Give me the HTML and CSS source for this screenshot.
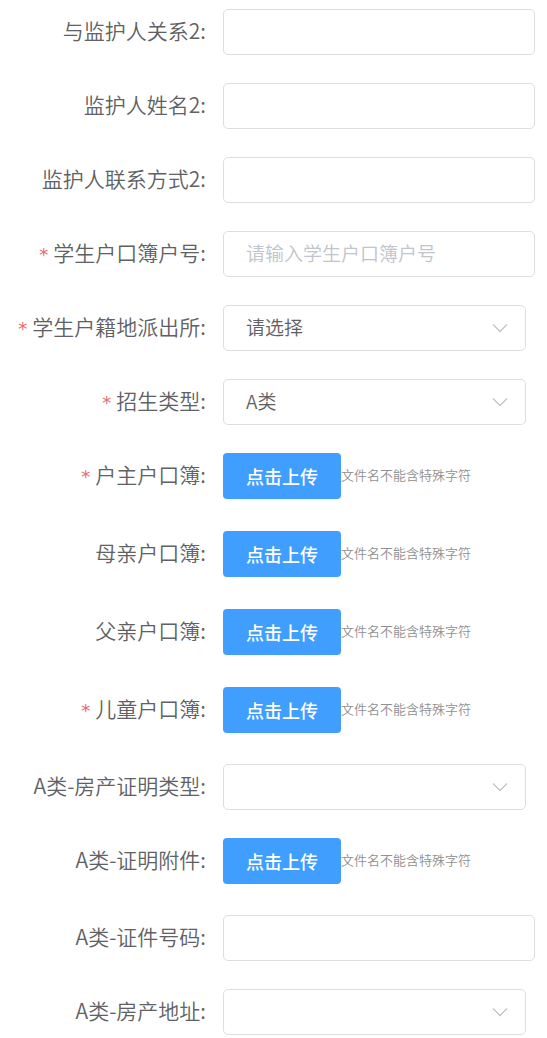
FILE: index.html
```html
<!DOCTYPE html>
<html lang="zh-CN">
<head>
    <meta charset="UTF-8">
    <meta name="viewport" content="width=device-width, initial-scale=1.0">
    <title>学生信息登记</title>
    <link rel="stylesheet" href="styles.css">
</head>
<body>
    <form class="form">
        <div class="form-item">
            <label class="form-label" for="relation2">与监护人关系2:</label>
            <div class="form-content"><input class="input" type="text" id="relation2"></div>
        </div>
        <div class="form-item">
            <label class="form-label" for="name2">监护人姓名2:</label>
            <div class="form-content"><input class="input" type="text" id="name2"></div>
        </div>
        <div class="form-item">
            <label class="form-label" for="phone2">监护人联系方式2:</label>
            <div class="form-content"><input class="input" type="text" id="phone2"></div>
        </div>
        <div class="form-item">
            <label class="form-label required" for="bookNo">学生户口簿户号:</label>
            <div class="form-content"><input class="input" type="text" id="bookNo" placeholder="请输入学生户口簿户号"></div>
        </div>
        <div class="form-item">
            <label class="form-label required" for="police">学生户籍地派出所:</label>
            <div class="form-content select-wrap">
                <select class="input" id="police">
                    <option>请选择</option>
                </select>
                <svg class="arrow" viewBox="0 0 16 10"><path d="M1 1.5 L8 8.5 L15 1.5"/></svg>
            </div>
        </div>
        <div class="form-item">
            <label class="form-label required" for="enrollType">招生类型:</label>
            <div class="form-content select-wrap">
                <select class="input" id="enrollType">
                    <option>A类</option>
                </select>
                <svg class="arrow" viewBox="0 0 16 10"><path d="M1 1.5 L8 8.5 L15 1.5"/></svg>
            </div>
        </div>
        <div class="form-item upload-item">
            <label class="form-label required" for="ownerBook">户主户口簿:</label>
            <div class="form-content">
                <button class="upload-btn" type="button" id="ownerBook">点击上传</button>
                <span class="tip">文件名不能含特殊字符</span>
            </div>
        </div>
        <div class="form-item upload-item">
            <label class="form-label" for="motherBook">母亲户口簿:</label>
            <div class="form-content">
                <button class="upload-btn" type="button" id="motherBook">点击上传</button>
                <span class="tip">文件名不能含特殊字符</span>
            </div>
        </div>
        <div class="form-item upload-item">
            <label class="form-label" for="fatherBook">父亲户口簿:</label>
            <div class="form-content">
                <button class="upload-btn" type="button" id="fatherBook">点击上传</button>
                <span class="tip">文件名不能含特殊字符</span>
            </div>
        </div>
        <div class="form-item upload-item">
            <label class="form-label required" for="childBook">儿童户口簿:</label>
            <div class="form-content">
                <button class="upload-btn" type="button" id="childBook">点击上传</button>
                <span class="tip">文件名不能含特殊字符</span>
            </div>
        </div>
        <div class="form-item">
            <label class="form-label" for="houseType">A类-房产证明类型:</label>
            <div class="form-content select-wrap">
                <select class="input" id="houseType">
                    <option></option>
                </select>
                <svg class="arrow" viewBox="0 0 16 10"><path d="M1 1.5 L8 8.5 L15 1.5"/></svg>
            </div>
        </div>
        <div class="form-item upload-item">
            <label class="form-label" for="proofFile">A类-证明附件:</label>
            <div class="form-content">
                <button class="upload-btn" type="button" id="proofFile">点击上传</button>
                <span class="tip">文件名不能含特殊字符</span>
            </div>
        </div>
        <div class="form-item">
            <label class="form-label" for="certNo">A类-证件号码:</label>
            <div class="form-content"><input class="input" type="text" id="certNo"></div>
        </div>
        <div class="form-item">
            <label class="form-label" for="houseAddr">A类-房产地址:</label>
            <div class="form-content select-wrap">
                <select class="input" id="houseAddr">
                    <option></option>
                </select>
                <svg class="arrow" viewBox="0 0 16 10"><path d="M1 1.5 L8 8.5 L15 1.5"/></svg>
            </div>
        </div>
    </form>
</body>
</html>
```
FILE: styles.css
```css
* {
    box-sizing: border-box;
}
body {
    margin: 0;
    background: #fff;
    color: #606164;
    font-family: "Noto Sans CJK SC", sans-serif;
    font-weight: 350;
}
.form {
    display: flex;
    flex-direction: column;
    gap: 28px;
    padding: 9px 12px 0 0;
}
.form-item {
    display: flex;
}
/* upload rows sit a little further apart */
.upload-item {
    margin-bottom: 3px;
}
.upload-item + .upload-item {
    margin-top: 1px;
}
.form-label {
    flex: none;
    width: 223px;
    padding-right: 17px;
    font-size: 21px;
    line-height: 42px;
    text-align: right;
    white-space: nowrap;
}
.required::before {
    content: "*";
    margin-right: 5px;
    color: #e66a6a;
    font-family: "DejaVu Sans", sans-serif;
    font-size: 18px;
    font-weight: 400;
}
.form-content {
    flex: 1;
    min-width: 0;
    display: flex;
    align-items: center;
}
.input {
    width: 100%;
    height: 46px;
    padding: 0 22px 3px;
    border: 1px solid #dddee1;
    border-radius: 5px;
    background: #fff;
    color: #606164;
    font-family: inherit;
    font-size: 19px;
    font-weight: inherit;
    outline: none;
    appearance: none;
}
.input::placeholder {
    color: #c0c4cc;
}
.input:focus {
    border-color: #409eff;
}
.select-wrap {
    position: relative;
    margin-right: 9px;
}
.arrow {
    position: absolute;
    right: 18px;
    width: 16px;
    height: 10px;
    fill: none;
    stroke: #c0c4cc;
    stroke-width: 1.3;
    pointer-events: none;
}
.upload-btn {
    height: 46px;
    width: 118px;
    padding: 0;
    border: none;
    border-radius: 4px;
    background: #409eff;
    color: #fff;
    font-family: inherit;
    font-size: 18px;
    font-weight: 500;
    cursor: pointer;
}
.tip {
    padding-bottom: 3px;
    color: #909090;
    font-size: 13px;
}
```
